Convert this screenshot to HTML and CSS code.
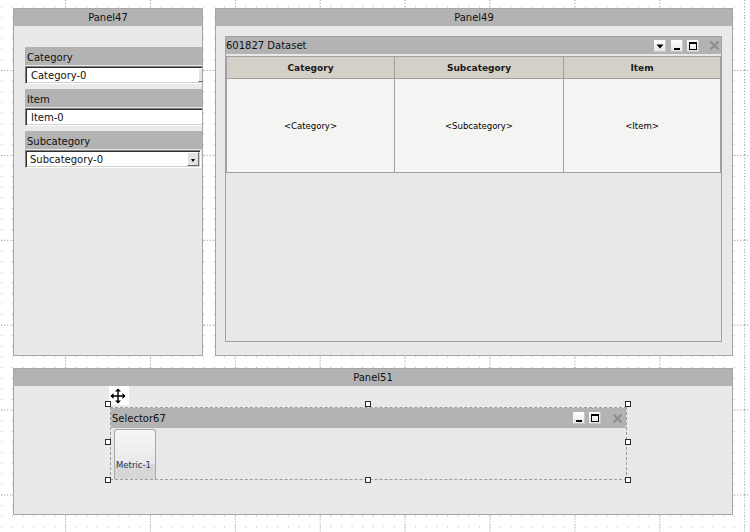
FILE: index.html
```html
<!DOCTYPE html>
<html lang="en">
<head>
    <meta charset="UTF-8">
    <meta name="viewport" content="width=device-width, initial-scale=1.0">
    <title>Dashboard Designer</title>
    <link rel="stylesheet" href="styles.css">
</head>
<body>
    <!-- design surface grid -->
    <svg class="grid" width="750" height="532">
        <defs>
            <pattern id="minorDots" x="1.325" y="6.325" width="10.6125" height="10.6125" patternUnits="userSpaceOnUse">
                <rect width="1" height="1" fill="#b0b0b0"/>
            </pattern>
            <pattern id="majorLines" x="65" y="70" width="84.9" height="84.9" patternUnits="userSpaceOnUse">
                <line x1="0.5" y1="0" x2="0.5" y2="84.9" stroke="#9a9a9a" stroke-dasharray="1 2"/>
                <line x1="0" y1="0.5" x2="84.9" y2="0.5" stroke="#9a9a9a" stroke-dasharray="1 2"/>
            </pattern>
        </defs>
        <rect width="750" height="532" fill="url(#minorDots)"/>
        <rect width="750" height="532" fill="url(#majorLines)"/>
    </svg>

    <div class="canvas">
        <div class="top-row">
            <section class="panel panel-filters">
                <div class="panel-head">Panel47</div>
                <div class="panel-body filters">
                    <div class="field">
                        <div class="field-label">Category</div>
                        <div class="control combo combo-category">
                            <span class="value">Category-0</span>
                            <span class="drop-btn"></span>
                        </div>
                    </div>
                    <div class="field">
                        <div class="field-label">Item</div>
                        <div class="control textbox">
                            <span class="value">Item-0</span>
                        </div>
                    </div>
                    <div class="field">
                        <div class="field-label">Subcategory</div>
                        <div class="control combo combo-sub">
                            <span class="value">Subcategory-0</span>
                            <span class="drop-btn"></span>
                        </div>
                    </div>
                </div>
            </section>

            <section class="panel panel-data">
                <div class="panel-head">Panel49</div>
                <div class="panel-body data-body">
                    <div class="widget dataset">
                        <div class="widget-bar">
                            <span class="widget-title">601827 Dataset</span>
                            <div class="win-btns">
                                <span class="win-btn btn-menu">
                                    <svg width="12" height="12" viewBox="0 0 12 12"><path d="M2.5 4.5h7l-3.5 4z" fill="#000"/></svg>
                                </span>
                                <span class="win-btn btn-min">
                                    <svg width="12" height="12" viewBox="0 0 12 12"><rect x="3" y="8" width="6" height="2" fill="#000"/></svg>
                                </span>
                                <span class="win-btn btn-max">
                                    <svg width="12" height="12" viewBox="0 0 12 12"><rect x="2.5" y="2.5" width="7" height="7" fill="none" stroke="#000"/><rect x="2" y="2" width="8" height="2" fill="#000"/></svg>
                                </span>
                                <span class="btn-close">
                                    <svg width="11" height="11" viewBox="0 0 11 11"><path d="M1.5 1.5l8 8M9.5 1.5l-8 8" stroke="#8e8e8e" stroke-width="2.2"/></svg>
                                </span>
                            </div>
                        </div>
                        <table class="grid-table">
                            <colgroup>
                                <col class="col-a">
                                <col class="col-b">
                                <col>
                            </colgroup>
                            <thead>
                                <tr>
                                    <th>Category</th>
                                    <th>Subcategory</th>
                                    <th>Item</th>
                                </tr>
                            </thead>
                            <tbody>
                                <tr>
                                    <td>&lt;Category&gt;</td>
                                    <td>&lt;Subcategory&gt;</td>
                                    <td>&lt;Item&gt;</td>
                                </tr>
                            </tbody>
                        </table>
                    </div>
                </div>
            </section>
        </div>

        <section class="panel panel-selector">
            <div class="panel-head">Panel51</div>
            <div class="panel-body selector-body">
                <div class="selection">
                    <span class="move-grip">
                        <svg width="16" height="16" viewBox="0 0 16 16">
                            <path d="M8 1v14M1 8h14" stroke="#000" stroke-width="1.4"/>
                            <path d="M8 0.5l-3 3h6zM8 15.5l-3-3h6zM0.5 8l3-3v6zM15.5 8l-3-3v6z" fill="#000"/>
                        </svg>
                    </span>
                    <div class="widget selector">
                        <div class="widget-bar tall">
                            <span class="widget-title">Selector67</span>
                            <div class="win-btns">
                                <span class="win-btn btn-min">
                                    <svg width="12" height="12" viewBox="0 0 12 12"><rect x="3" y="8" width="6" height="2" fill="#000"/></svg>
                                </span>
                                <span class="win-btn btn-max">
                                    <svg width="12" height="12" viewBox="0 0 12 12"><rect x="2.5" y="2.5" width="7" height="7" fill="none" stroke="#000"/><rect x="2" y="2" width="8" height="2" fill="#000"/></svg>
                                </span>
                                <span class="btn-close">
                                    <svg width="11" height="11" viewBox="0 0 11 11"><path d="M1.5 1.5l8 8M9.5 1.5l-8 8" stroke="#8e8e8e" stroke-width="2.2"/></svg>
                                </span>
                            </div>
                        </div>
                        <div class="selector-items">
                            <div class="metric-btn">Metric-1</div>
                        </div>
                    </div>
                    <span class="handle h-tl"></span>
                    <span class="handle h-tc"></span>
                    <span class="handle h-tr"></span>
                    <span class="handle h-ml"></span>
                    <span class="handle h-mr"></span>
                    <span class="handle h-bl"></span>
                    <span class="handle h-bc"></span>
                    <span class="handle h-br"></span>
                </div>
            </div>
        </section>
    </div>
</body>
</html>
```

FILE: styles.css
```css
body {
    margin: 0;
    width: 750px;
    height: 532px;
    overflow: hidden;
    position: relative;
    background-color: #fff;
    font-family: "DejaVu Sans", sans-serif;
    font-size: 10px;
    color: #111;
}
.grid {
    position: absolute;
    left: 0;
    top: 0;
}
.canvas {
    position: relative;
    padding: 8px 0 0 13px;
}
.top-row {
    display: flex;
    gap: 12px;
}

/* panels */
.panel {
    box-sizing: border-box;
    display: flex;
    flex-direction: column;
    border: 1px solid #a5a5a5;
    background-color: #e9e9e9;
}
.panel-head {
    height: 17px;
    line-height: 17px;
    background-color: #b3b3b3;
    text-align: center;
    flex-shrink: 0;
}
.panel-body {
    flex: 1;
    min-height: 0;
    overflow: hidden;
}
.panel-filters {
    width: 190px;
    height: 348px;
}
.panel-data {
    width: 518px;
    height: 348px;
}
.panel-selector {
    width: 720px;
    height: 147px;
    margin-top: 12px;
}

/* filter fields */
.filters {
    padding: 21px 0 0 11px;
}
.field + .field {
    margin-top: 5px;
}
.field-label {
    width: 200px;
    height: 16px;
    line-height: 18px;
    padding: 2px 0 0 2px;
    background-color: #b3b3b3;
}
.control {
    box-sizing: border-box;
    display: flex;
    align-items: center;
    height: 18px;
    margin-top: 1px;
    padding-left: 5px;
    background-color: #fff;
    border-top: 1px solid #808080;
    border-left: 1px solid #808080;
    border-right: 1px solid #fff;
    border-bottom: 1px solid #fff;
    box-shadow: inset 1px 1px 0 #303030, inset -1px -1px 0 #d4d0c8;
}
.textbox {
    width: 200px;
}
.combo-category {
    width: 187px;
}
.combo-sub {
    width: 176px;
    padding-left: 4px;
}
.value {
    flex: 1;
    white-space: nowrap;
}
.drop-btn {
    position: relative;
    box-sizing: border-box;
    width: 12px;
    height: 14px;
    margin-right: 1px;
    background-color: #e2e2e2;
    border: 1px solid;
    border-color: #fff #6e6e6e #6e6e6e #fff;
}
.drop-btn::after {
    content: "";
    position: absolute;
    left: 3px;
    top: 6px;
    border-left: 2px solid transparent;
    border-right: 2px solid transparent;
    border-top: 3px solid #000;
}

/* widgets */
.data-body {
    display: flex;
    padding: 10px 10px 13px 9px;
}
.widget {
    box-sizing: border-box;
    background-color: #e8e8e8;
}
.dataset {
    flex: 1;
    border: 1px solid #a0a0a0;
}
.widget-bar {
    display: flex;
    align-items: center;
    height: 17px;
    background-color: #b3b3b3;
}
.widget-bar.tall {
    height: 20px;
    padding-left: 1px;
}
.win-btns {
    display: flex;
    align-items: center;
    margin-left: auto;
    padding-right: 2px;
}
.win-btn {
    display: block;
    width: 12px;
    height: 12px;
    margin-right: 4px;
    background: linear-gradient(#ffffff, #e4e4e4);
    box-shadow: inset -1px -1px 0 #c8c8c8;
}
.win-btn svg,
.btn-close svg {
    display: block;
}
.btn-menu {
    margin-right: 5px;
}
.btn-max {
    margin-right: 10px;
}
.btn-close {
    display: block;
    width: 10px;
    height: 11px;
}
.selector .win-btns {
    padding-right: 4px;
}
.selector .btn-max {
    margin-right: 11px;
}

/* dataset table */
.grid-table {
    width: 100%;
    margin-top: 2px;
    border-collapse: collapse;
    table-layout: fixed;
}
.col-a {
    width: 168px;
}
.col-b {
    width: 169px;
}
.grid-table th,
.grid-table td {
    padding: 0;
    border: 1px solid #a0a0a0;
    text-align: center;
}
.grid-table th {
    height: 21px;
    background-color: #d4d0c8;
    font-size: 9px;
    font-weight: bold;
    color: #1a1a1a;
}
.grid-table td {
    height: 93px;
    background-color: #f4f4f2;
    font-size: 8.5px;
    color: #000;
}

/* selector widget in design mode */
.selector-body {
    padding: 18px 0 0 94px;
}
.selection {
    position: relative;
    box-sizing: border-box;
    width: 520px;
    height: 76px;
    padding: 3px 1px 0 2px;
}
.selector {
    border: 1px dashed #9c9c9c;
}
.selector-items {
    height: 51px;
    padding: 1px 0 0 3px;
    box-sizing: border-box;
}
.metric-btn {
    box-sizing: border-box;
    display: flex;
    align-items: flex-end;
    width: 42px;
    height: 50px;
    padding: 0 0 9px 1px;
    border: 1px solid #a8a8a8;
    border-bottom: none;
    border-radius: 3px 3px 0 0;
    background: linear-gradient(#f6f6f6, #e9e9e9 68%, #d9d9d9 69%, #d6d6d6);
    font-size: 8.5px;
    color: #2a3550;
}
.move-grip {
    position: absolute;
    left: 1px;
    top: -18px;
    width: 20px;
    height: 19px;
    display: flex;
    align-items: center;
    justify-content: center;
    background-color: #fff;
}
.move-grip svg {
    margin-left: -2px;
}
.handle {
    position: absolute;
    box-sizing: border-box;
    width: 6px;
    height: 6px;
    border: 1px solid #2b2b2b;
    background-color: #fff;
}
.h-tl, .h-ml, .h-bl { left: -3px; }
.h-tc, .h-bc { left: 257px; }
.h-tr, .h-mr, .h-br { left: 517px; }
.h-tl, .h-tc, .h-tr { top: -3px; }
.h-ml, .h-mr { top: 35px; }
.h-bl, .h-bc, .h-br { top: 73px; }
```
